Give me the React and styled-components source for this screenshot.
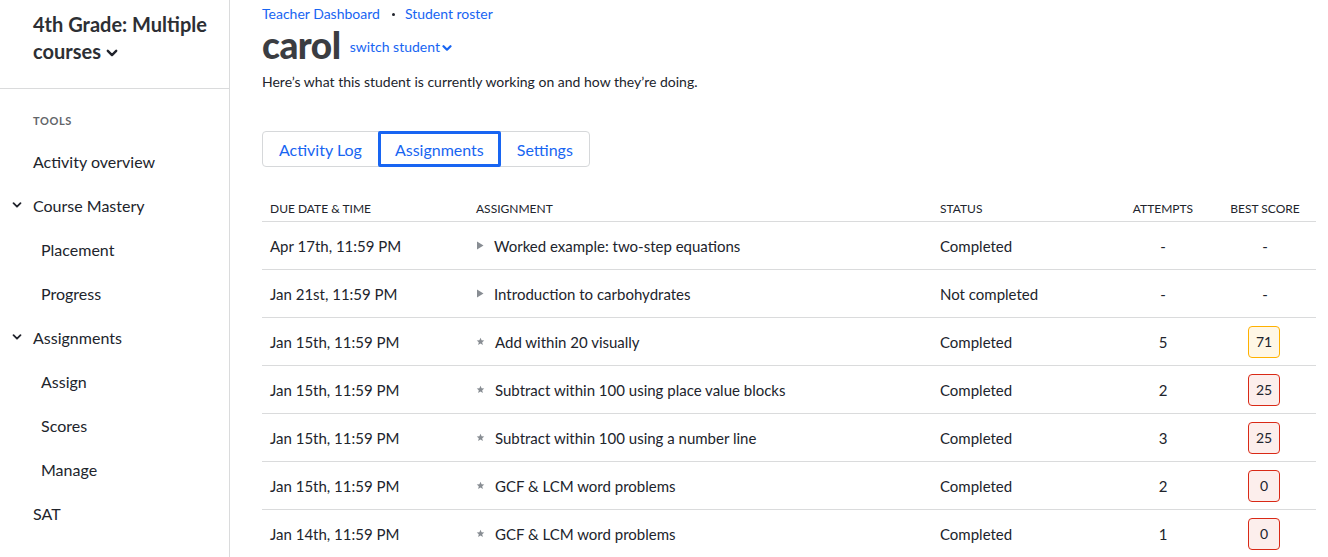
import styled, { createGlobalStyle } from "styled-components";

const GlobalStyle = createGlobalStyle`
  html, body {
    margin: 0;
    padding: 0;
    background: #fff;
    font-family: Lato, "Open Sans", sans-serif;
    color: #21242c;
  }
  * { box-sizing: border-box; }
`;

const blue = "#1865f2";

const rows = [
  { date: "Apr 17th, 11:59 PM", kind: "video", title: "Worked example: two-step equations", status: "Completed", attempts: "-", score: null },
  { date: "Jan 21st, 11:59 PM", kind: "video", title: "Introduction to carbohydrates", status: "Not completed", attempts: "-", score: null },
  { date: "Jan 15th, 11:59 PM", kind: "exercise", title: "Add within 20 visually", status: "Completed", attempts: "5", score: 71 },
  { date: "Jan 15th, 11:59 PM", kind: "exercise", title: "Subtract within 100 using place value blocks", status: "Completed", attempts: "2", score: 25 },
  { date: "Jan 15th, 11:59 PM", kind: "exercise", title: "Subtract within 100 using a number line", status: "Completed", attempts: "3", score: 25 },
  { date: "Jan 15th, 11:59 PM", kind: "exercise", title: "GCF & LCM word problems", status: "Completed", attempts: "2", score: 0 },
  { date: "Jan 14th, 11:59 PM", kind: "exercise", title: "GCF & LCM word problems", status: "Completed", attempts: "1", score: 0 },
];

const Chevron = ({ size = 10, color = "currentColor", width = 2 }) => (
  <svg width={size} height={size} viewBox="0 0 10 10" fill="none">
    <path d="M1.5 3.2 L5 6.7 L8.5 3.2" stroke={color} strokeWidth={width} strokeLinecap="round" strokeLinejoin="round" />
  </svg>
);

const Triangle = () => (
  <svg width="8" height="9" viewBox="0 0 8 9">
    <path d="M1 0.5 L7.5 4.5 L1 8.5 Z" fill="#888d93" />
  </svg>
);

const Star = () => (
  <svg width="9" height="9" viewBox="0 0 24 24">
    <path d="M12 2 L14.9 8.6 L22 9.3 L16.6 14 L18.2 21 L12 17.3 L5.8 21 L7.4 14 L2 9.3 L9.1 8.6 Z" fill="#888d93" />
  </svg>
);

const Page = styled.div`
  display: flex;
  min-height: 557px;
`;

const Sidebar = styled.aside`
  width: 230px;
  flex-shrink: 0;
  border-right: 1px solid #dadbdc;
  min-height: 557px;
`;

const CourseHeader = styled.div`
  padding: 11px 20px 14px 33px;
  border-bottom: 1px solid #dadbdc;
  height: 89px;
`;

const CourseTitle = styled.div`
  font-size: 20px;
  font-weight: 700;
  line-height: 27px;
  color: #2d2f34;
  svg {
    margin-left: 5px;
    vertical-align: middle;
    position: relative;
    top: -1px;
  }
`;

const NavSection = styled.nav`
  padding: 25px 0 0;
`;

const SectionLabel = styled.div`
  padding-left: 33px;
  font-size: 11px;
  font-weight: 700;
  letter-spacing: 0.6px;
  color: #626569;
  height: 19px;
  margin-bottom: 6px;
`;

const NavItem = styled.div`
  display: flex;
  align-items: center;
  height: 44px;
  font-size: 16px;
  padding-left: ${(p) => (p.$sub ? "41px" : "33px")};
  position: relative;
  color: #21242c;
`;

const NavCaret = styled.span`
  position: absolute;
  left: 12px;
  top: 17px;
  display: flex;
`;

const Main = styled.main`
  flex: 1;
  padding: 4px 12px 0 32px;
`;

const Breadcrumbs = styled.div`
  display: flex;
  align-items: center;
  font-size: 14px;
  color: ${blue};
  height: 18px;
`;

const Dot = styled.span`
  width: 3px;
  height: 3px;
  border-radius: 50%;
  background: #21242c;
  margin: 2px 10px 0 12px;
`;

const NameRow = styled.div`
  display: flex;
  align-items: center;
  margin-top: 1px;
`;

const StudentName = styled.h1`
  margin: 0;
  font-size: 37px;
  font-weight: 900;
  line-height: 44px;
  color: #3b3d42;
  letter-spacing: -0.5px;
`;

const SwitchLink = styled.span`
  font-size: 14px;
  color: ${blue};
  margin-left: 9px;
  margin-top: 3px;
  svg {
    margin-left: 2px;
    vertical-align: -1px;
  }
`;

const Description = styled.p`
  margin: 6px 0 0;
  font-size: 14px;
  line-height: 18px;
  color: #21242c;
`;

const Tabs = styled.div`
  display: inline-flex;
  margin-top: 40px;
  border: 1px solid #d6d8da;
  border-radius: 4px;
  height: 36px;
`;

const Tab = styled.div`
  display: flex;
  align-items: center;
  padding: 0 ${(p) => p.$pad}px;
  font-size: 16px;
  color: ${blue};
  margin: -1px 0;
  border: ${(p) => (p.$active ? `3px solid ${blue}` : "3px solid transparent")};
  border-radius: ${(p) => (p.$active ? "2px" : "4px")};
`;

const Table = styled.div`
  margin-top: 25px;
  width: 1054px;
`;

const Row = styled.div`
  display: grid;
  grid-template-columns: 206px 464px 180px 102px 102px;
  align-items: center;
  height: ${(p) => (p.$head ? "30px" : "48px")};
  padding-top: ${(p) => (p.$head ? "3px" : "0")};
  border-bottom: 1px solid #dadbdc;
  font-size: ${(p) => (p.$head ? "12px" : "15px")};
  text-transform: ${(p) => (p.$head ? "uppercase" : "none")};
  color: #21242c;
`;

const Cell = styled.div`
  padding-left: ${(p) => (p.$center ? "0" : "8px")};
  text-align: ${(p) => (p.$center ? "center" : "left")};
  display: flex;
  align-items: center;
  justify-content: ${(p) => (p.$center ? "center" : "flex-start")};
`;

const TitleCell = styled(Cell)`
  padding-left: 8px;
  gap: 10px;
  svg { flex-shrink: 0; }
`;

const Badge = styled.div`
  width: 32px;
  height: 32px;
  border-radius: 4px;
  display: flex;
  align-items: center;
  justify-content: center;
  font-size: 14px;
  margin-left: -2px;
  border: 1px solid ${(p) => (p.$tone === "warn" ? "#ffb100" : "#d92916")};
  background: ${(p) => (p.$tone === "warn" ? "#fff7e6" : "#fceeec")};
`;

export default function App() {
  return (
    <>
      <GlobalStyle />
      <Page>
        <Sidebar>
          <CourseHeader>
            <CourseTitle>
              4th Grade: Multiple courses
              <Chevron size={12} width={2} color="#21242c" />
            </CourseTitle>
          </CourseHeader>
          <NavSection>
            <SectionLabel>TOOLS</SectionLabel>
            <NavItem>Activity overview</NavItem>
            <NavItem>
              <NavCaret><Chevron size={10} width={1.8} color="#21242c" /></NavCaret>
              Course Mastery
            </NavItem>
            <NavItem $sub>Placement</NavItem>
            <NavItem $sub>Progress</NavItem>
            <NavItem>
              <NavCaret><Chevron size={10} width={1.8} color="#21242c" /></NavCaret>
              Assignments
            </NavItem>
            <NavItem $sub>Assign</NavItem>
            <NavItem $sub>Scores</NavItem>
            <NavItem $sub>Manage</NavItem>
            <NavItem>SAT</NavItem>
          </NavSection>
        </Sidebar>
        <Main>
          <Breadcrumbs>
            <span>Teacher Dashboard</span>
            <Dot />
            <span>Student roster</span>
          </Breadcrumbs>
          <NameRow>
            <StudentName>carol</StudentName>
            <SwitchLink>
              switch student
              <Chevron size={10} width={2.2} color={blue} />
            </SwitchLink>
          </NameRow>
          <Description>Here’s what this student is currently working on and how they’re doing.</Description>
          <Tabs>
            <Tab $pad={13}>Activity Log</Tab>
            <Tab $pad={14} $active>Assignments</Tab>
            <Tab $pad={13}>Settings</Tab>
          </Tabs>
          <Table>
            <Row $head>
              <Cell>Due date &amp; time</Cell>
              <Cell>Assignment</Cell>
              <Cell>Status</Cell>
              <Cell $center>Attempts</Cell>
              <Cell $center>Best score</Cell>
            </Row>
            {rows.map((r, i) => (
              <Row key={i}>
                <Cell>{r.date}</Cell>
                <TitleCell>
                  {r.kind === "video" ? <Triangle /> : <Star />}
                  <span>{r.title}</span>
                </TitleCell>
                <Cell>{r.status}</Cell>
                <Cell $center>{r.attempts}</Cell>
                <Cell $center>
                  {r.score === null ? "-" : (
                    <Badge $tone={r.score >= 70 ? "warn" : "bad"}>{r.score}</Badge>
                  )}
                </Cell>
              </Row>
            ))}
          </Table>
        </Main>
      </Page>
    </>
  );
}
